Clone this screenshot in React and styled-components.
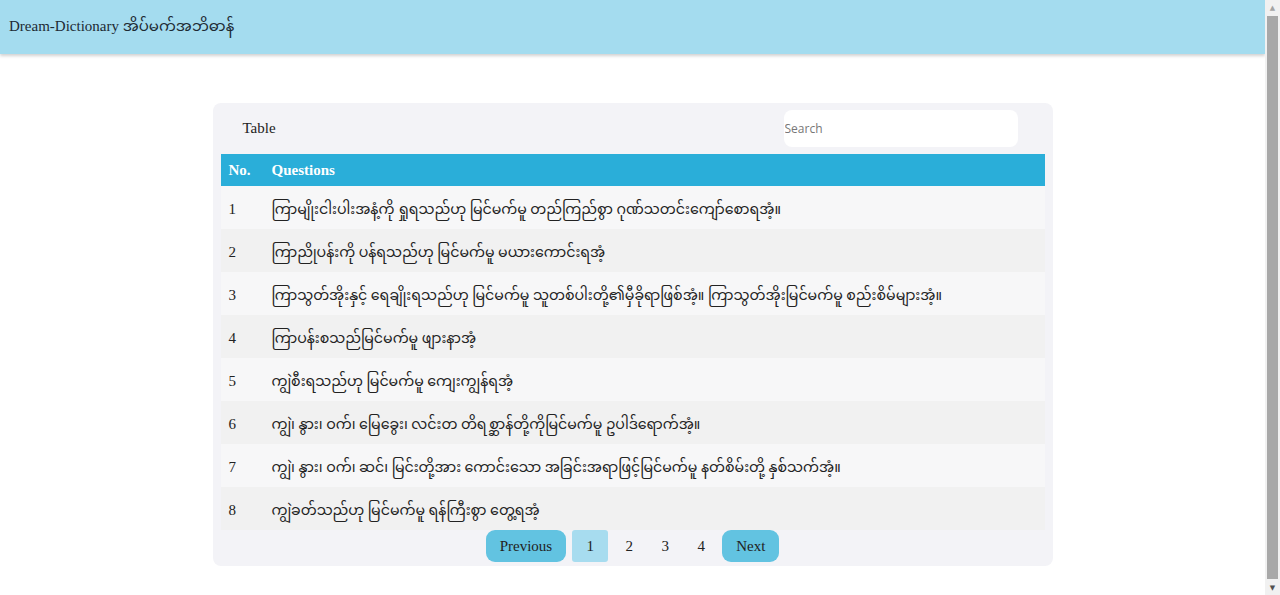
import React, { useState } from "react";
import styled, { createGlobalStyle } from "styled-components";

const GlobalStyle = createGlobalStyle`
  body {
    margin: 0 15px 0 0;
    font-family: "Liberation Serif", "Noto Sans Myanmar", "Myanmar Text", serif;
    color: #222;
    background: #fff;
  }
`;

// browser chrome: the vertical scrollbar seen in the screenshot
const ScrollTrack = styled.div`
  position: fixed;
  top: 0;
  right: 0;
  bottom: 0;
  width: 15px;
  background: #f1f1f1;
  display: flex;
  flex-direction: column;
  align-items: center;
`;

const ScrollArrow = styled.div`
  height: 15px;
  width: 15px;
  display: flex;
  align-items: center;
  justify-content: center;
  color: ${(p) => (p.$dim ? "#a3a3a3" : "#505050")};
  font-size: 7px;
  font-family: "DejaVu Sans", sans-serif;
`;

const ScrollThumb = styled.div`
  flex: 1;
  width: 11px;
  background: #a8a8a8;
  margin: 1px 0 1px;
`;

const Header = styled.header`
  height: 54px;
  background: #a4dcef;
  display: flex;
  align-items: center;
  padding-left: 9px;
  box-shadow: 0 2px 3px rgba(0, 0, 0, 0.18);
  font-size: 15px;
  color: #1d2a33;
`;

const Main = styled.main`
  padding: 49px 0 40px;
`;

const Card = styled.section`
  width: 840px;
  margin: 0 auto;
  background: #f3f3f7;
  border-radius: 8px;
  padding: 0 8px 4px;
  box-sizing: border-box;
`;

const TopBar = styled.div`
  height: 51px;
  display: flex;
  align-items: center;
  justify-content: space-between;
  padding: 0 27px 0 22px;
`;

const Title = styled.span`
  font-size: 15px;
`;

const Search = styled.input`
  width: 234px;
  height: 37px;
  box-sizing: border-box;
  border: none;
  border-radius: 8px;
  background: #fff;
  padding: 0 1px;
  font-family: "Open Sans", "Liberation Sans", sans-serif;
  font-size: 12px;
  outline: none;
  &::placeholder {
    color: #777;
  }
`;

const Table = styled.table`
  width: 100%;
  border-collapse: collapse;
  table-layout: fixed;
`;

const Th = styled.th`
  background: #2aaed9;
  color: #fff;
  text-align: left;
  font-weight: bold;
  font-size: 15px;
  height: 32px;
  padding: 0 8px;
  box-sizing: border-box;
  width: ${(p) => p.$w || "auto"};
`;

const Tr = styled.tr`
  background: ${(p) => (p.$odd ? "#f7f7f8" : "#f1f1f1")};
`;

const Td = styled.td`
  height: 43px;
  padding: 3px 8px 0;
  box-sizing: border-box;
  font-size: ${(p) => (p.$text ? "14.2px" : "15px")};
  line-height: 20px;
  vertical-align: middle;
  white-space: nowrap;
`;

const Pager = styled.nav`
  display: flex;
  justify-content: center;
  align-items: center;
  gap: 6px;
  height: 32px;
`;

const PageBtn = styled.button`
  height: 32px;
  border: none;
  border-radius: ${(p) => (p.$wide ? "9px" : "3px")};
  padding: 0 14px;
  min-width: 36px;
  background: ${(p) => (p.$wide ? "#62c3e1" : p.$active ? "#a7dcef" : "transparent")};
  color: #222;
  font-family: "Liberation Serif", serif;
  font-size: 15px;
  cursor: pointer;
  margin: ${(p) => (p.$plain ? "0 -3px" : "0")};
`;

const rows = [
  "ကြာမျိုးငါးပါးအနံ့ကို ရှုရသည်ဟု မြင်မက်မူ တည်ကြည်စွာ ဂုဏ်သတင်းကျော်စောရအံ့။",
  "ကြာညိုပန်းကို ပန်ရသည်ဟု မြင်မက်မူ မယားကောင်းရအံ့",
  "ကြာသွတ်အိုးနှင့် ရေချိုးရသည်ဟု မြင်မက်မူ သူတစ်ပါးတို့၏မှီခိုရာဖြစ်အံ့။ ကြာသွတ်အိုးမြင်မက်မူ စည်းစိမ်များအံ့။",
  "ကြာပန်းစသည်မြင်မက်မူ ဖျားနာအံ့",
  "ကျွဲစီးရသည်ဟု မြင်မက်မူ ကျေးကျွန်ရအံ့",
  "ကျွဲ၊ နွား၊ ဝက်၊ မြေခွေး၊ လင်းတ တိရစ္ဆာန်တို့ကိုမြင်မက်မူ ဥပါဒ်ရောက်အံ့။",
  "ကျွဲ၊ နွား၊ ဝက်၊ ဆင်၊ မြင်းတို့အား ကောင်းသော အခြင်းအရာဖြင့်မြင်မက်မူ နတ်စိမ်းတို့ နှစ်သက်အံ့။",
  "ကျွဲခတ်သည်ဟု မြင်မက်မူ ရန်ကြီးစွာ တွေ့ရအံ့",
];

export default function App() {
  const [query, setQuery] = useState("");
  const [page, setPage] = useState(1);

  return (
    <>
      <GlobalStyle />
      <Header>Dream-Dictionary အိပ်မက်အဘိဓာန်</Header>
      <Main>
        <Card>
          <TopBar>
            <Title>Table</Title>
            <Search
              placeholder="Search"
              value={query}
              onChange={(e) => setQuery(e.target.value)}
            />
          </TopBar>
          <Table>
            <thead>
              <tr>
                <Th $w="43px">No.</Th>
                <Th>Questions</Th>
              </tr>
            </thead>
            <tbody>
              {rows.map((q, i) => (
                <Tr key={i} $odd={i % 2 === 0}>
                  <Td>{i + 1}</Td>
                  <Td $text>{q}</Td>
                </Tr>
              ))}
            </tbody>
          </Table>
          <Pager>
            <PageBtn $wide onClick={() => setPage(Math.max(1, page - 1))}>Previous</PageBtn>
            {[1, 2, 3, 4].map((n) => (
              <PageBtn key={n} $active={page === n} $plain={page !== n} onClick={() => setPage(n)}>
                {n}
              </PageBtn>
            ))}
            <PageBtn $wide onClick={() => setPage(Math.min(4, page + 1))}>Next</PageBtn>
          </Pager>
        </Card>
      </Main>
      <ScrollTrack>
        <ScrollArrow $dim>▲</ScrollArrow>
        <ScrollThumb />
        <ScrollArrow>▼</ScrollArrow>
      </ScrollTrack>
    </>
  );
}
